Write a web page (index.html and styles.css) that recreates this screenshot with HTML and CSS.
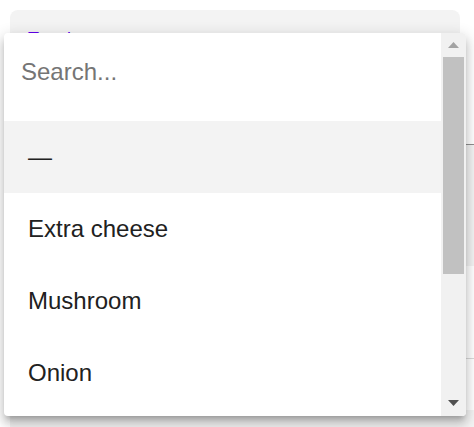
FILE: index.html
```html
<!DOCTYPE html>
<html>
<head>
<meta charset="utf-8">
<link rel="stylesheet" href="styles.css">
</head>
<body>
<div class="page">
  <div class="card">
    <div class="label">Toppings</div>
  </div>
  <div class="band band-grey"></div>
  <div class="band band-white"></div>
  <div class="band band-bottom"></div>
</div>

<div class="panel">
  <div class="list">
    <div class="search-row">
      <input class="search" type="text" placeholder="Search...">
    </div>
    <div class="option active">—</div>
    <div class="option">Extra cheese</div>
    <div class="option">Mushroom</div>
    <div class="option">Onion</div>
  </div>
  <div class="scrollbar">
    <div class="sb-btn">
      <svg width="25" height="24" viewBox="0 0 25 24"><polygon points="7,15 18,15 12.5,9" fill="#a3a3a3"/></svg>
    </div>
    <div class="sb-track">
      <div class="sb-thumb"></div>
    </div>
    <div class="sb-btn">
      <svg width="25" height="24" viewBox="0 0 25 24"><polygon points="7,8 18,8 12.5,14" fill="#505050"/></svg>
    </div>
  </div>
</div>
</body>
</html>
```
FILE: styles.css
```css
html, body {
  margin: 0;
  padding: 0;
  background: #ffffff;
  font-family: "Liberation Sans", Arial, sans-serif;
  overflow: hidden;
}

.page {
  padding: 10px 0 0 10px;
  height: 427px;
  box-sizing: border-box;
  overflow: hidden;
}

.card {
  width: 450px;
  height: 134px;
  box-sizing: border-box;
  background: #f3f3f3;
  border-radius: 8px 8px 0 0;
  padding: 19px 18px 0;
}

.label {
  color: #6200ee;
  font-size: 18px;
  line-height: 20px;
}

.band {
  box-sizing: border-box;
}

.band-grey {
  height: 122px;
  border-top: 1px solid #8f8f8f;
  background: #f3f3f3;
}

.band-white {
  height: 93px;
  background: #ffffff;
  border-bottom: 1px solid #d9d9d9;
}

.band-bottom {
  height: 17px;
  background: #f3f3f3;
  margin-top: 51px;
}

.panel {
  position: absolute;
  left: 4px;
  top: 33px;
  width: 462px;
  height: 383px;
  background: #ffffff;
  border-radius: 4px;
  overflow: hidden;
  display: flex;
  box-shadow: 0 5px 5px -3px rgba(0,0,0,0.2), 0 8px 10px 1px rgba(0,0,0,0.14), 0 3px 14px 2px rgba(0,0,0,0.12);
}

.list {
  flex: 1;
  overflow: hidden;
}

.search-row {
  height: 88px;
  box-sizing: border-box;
  padding: 25px 17px 0;
}

.search {
  display: block;
  width: 100%;
  box-sizing: border-box;
  border: none;
  outline: none;
  padding: 0;
  margin: 0;
  height: 28px;
  line-height: 28px;
  font-family: "Liberation Sans", Arial, sans-serif;
  font-size: 24px;
  color: #212121;
  background: transparent;
}

.search::placeholder {
  color: #757575;
  opacity: 1;
}

.option {
  height: 72px;
  display: flex;
  align-items: center;
  padding-left: 24px;
  font-size: 24px;
  color: #212121;
}

.option.active {
  background: #f3f3f3;
}

.scrollbar {
  width: 25px;
  background: #f1f1f1;
  display: flex;
  flex-direction: column;
}

.sb-btn {
  height: 24px;
  flex: none;
}

.sb-btn svg {
  display: block;
}

.sb-track {
  flex: 1;
  padding: 0 2px;
}

.sb-thumb {
  height: 217px;
  background: #c1c1c1;
}
```
